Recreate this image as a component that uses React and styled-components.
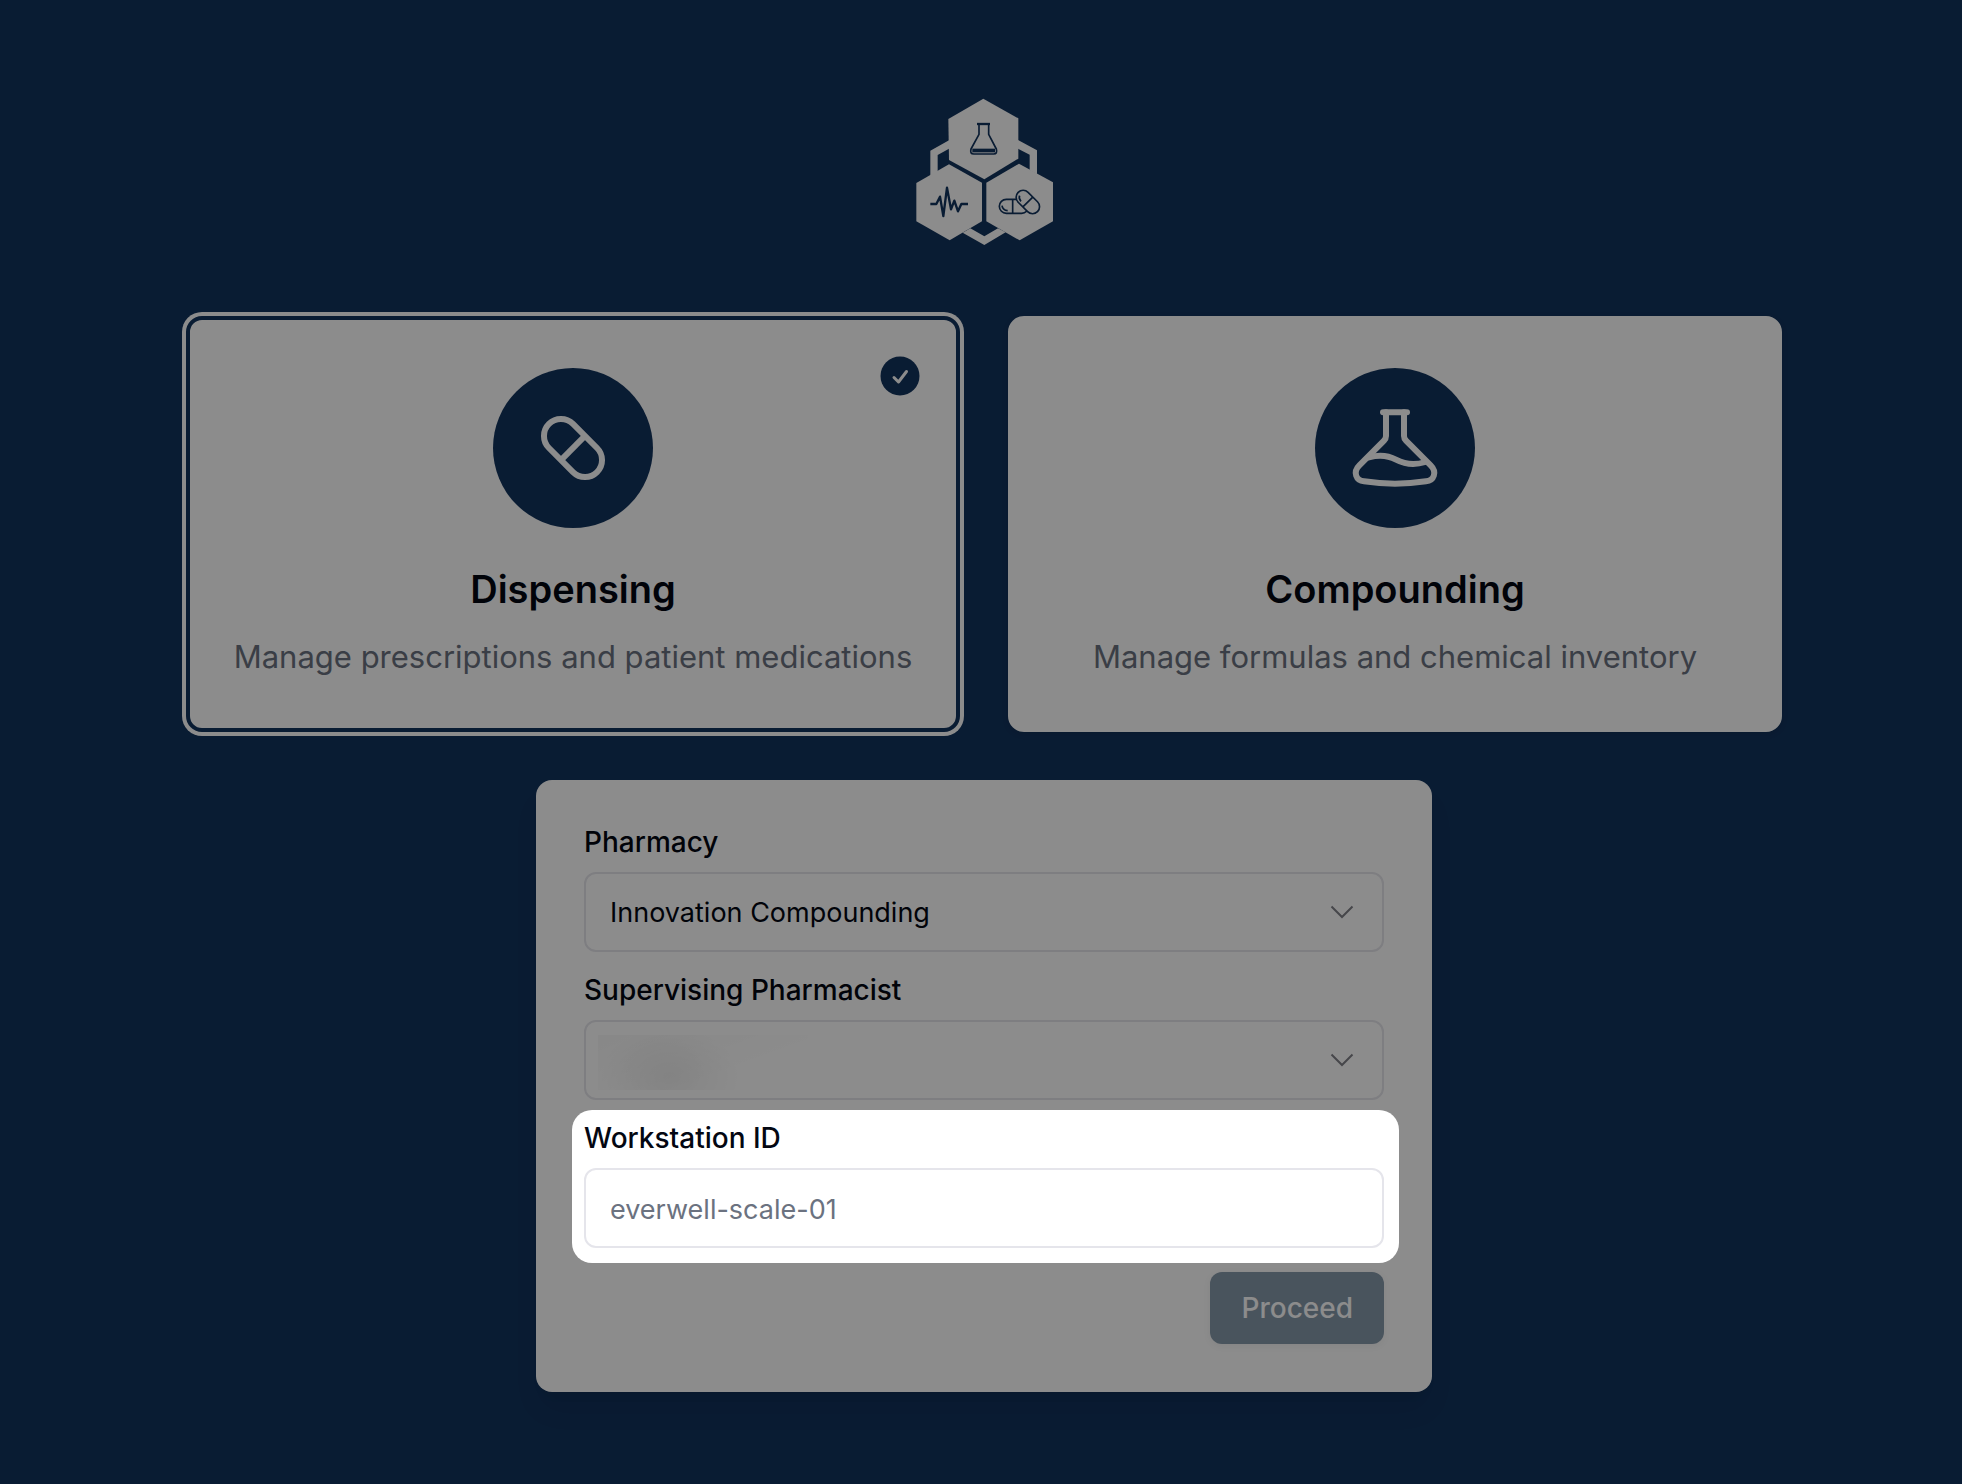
import React, { useState } from 'react'
import styled, { createGlobalStyle, css } from 'styled-components';

const NAVY = '#12335d';

const workspaces = [
    { id: 'dispensing', title: 'Dispensing', text: 'Manage prescriptions and patient medications', Icon: PillIcon },
    { id: 'compounding', title: 'Compounding', text: 'Manage formulas and chemical inventory', Icon: FlaskIcon },
]

function Logo() {
    return (
        <svg width="160" height="160" viewBox="12 21 480 480" role="img" aria-label="Pharmacy logo">
            <g fill="#fff">
                <path d="M250 41 355 100V221L253 283 147 225 145 102Z" />
                <path d="M147 238 246 293V409L149 466 49 409V294Z" />
                <path d="M357 236 459 292V409L359 466 259 409V293Z" />
                <path d="M147 166 91 197V273L113 261V210L147 191Z" />
                <path d="M354 165 411 196V268L389 256V209L354 191Z" />
                <path d="M188 443 253 480 317 442 294 430 253 454 211 430Z" />
            </g>
            <g fill="none" stroke={NAVY} strokeWidth="5" strokeLinejoin="round">
                <path d="M231 117H270" strokeWidth="7" />
                <path d="M237 119V148L213 192Q209 207 221 207H281Q293 207 289 192L266 148V119" />
                <path d="M217 191H285V202H217Z" fill={NAVY} stroke="none" />
                <path d="M91 357H109L120 335 130 393 141 308 153 373 163 347 174 379 184 357H204" strokeWidth="7" />
                <rect x="298" y="343" width="88" height="42" rx="21" />
                <path d="M338 343V385M306 362Q308 376 323 377" />
                <g transform="translate(383.5 351) rotate(45)">
                    <rect x="-41" y="-21" width="82" height="42" rx="21" fill="#fff" />
                    <path d="M0 -21V21M-31 4Q-27 13 -16 13" />
                </g>
            </g>
        </svg>
    )
}

function PillIcon() {
    return (
        <svg width="80" height="80" viewBox="-40 -40 80 80" fill="none" stroke="#fff" strokeWidth="6" aria-hidden="true">
            <g transform="rotate(45)">
                <rect x="-34" y="-17" width="68" height="34" rx="17" />
                <path d="M0 -17V17" />
            </g>
        </svg>
    )
}

function FlaskIcon() {
    return (
        <svg width="96" height="96" viewBox="171 150 288 288" fill="none" stroke="#fff" strokeWidth="18" strokeLinecap="round" aria-hidden="true">
            <path d="M279 187H351" />
            <path d="M288 187V258Q288 266 282 272L208 346C188 366 198 392 222 394Q315 408 408 394C432 392 442 366 422 346L348 272Q342 266 342 258V187" />
            <path d="M237 322C260 316 290 314 318 329C345 343 375 346 406 336" />
        </svg>
    )
}

function Chevron() {
    return (
        <ChevronSvg viewBox="0 0 28 28" aria-hidden="true">
            <path d="M3.5 8.5 14 19 24.5 8.5" fill="none" stroke="currentColor" strokeWidth="2" />
        </ChevronSvg>
    )
}

function App() {
    const [selected, setSelected] = useState('dispensing');

    return (
        <Page>
            <GlobalStyle />
            <Logo />
            <Cards>
                {workspaces.map(({ id, title, text, Icon }) => (
                    <Card
                        key={id}
                        type="button"
                        aria-pressed={selected === id}
                        $active={selected === id}
                        onClick={() => setSelected(id)}
                    >
                        {selected === id && (
                            <Badge viewBox="0 0 40 40" aria-hidden="true">
                                <circle cx="20" cy="20" r="19.5" fill={NAVY} />
                                <path d="M14 21.5 18.5 26 26.5 15.5" />
                            </Badge>
                        )}
                        <IconCircle><Icon /></IconCircle>
                        <CardTitle>{title}</CardTitle>
                        <CardText>{text}</CardText>
                    </Card>
                ))}
            </Cards>
            <Form onSubmit={e => e.preventDefault()}>
                <Field>
                    <Label htmlFor="pharmacy">Pharmacy</Label>
                    <SelectBox>
                        <Select id="pharmacy"><option>Innovation Compounding</option></Select>
                        <Chevron />
                    </SelectBox>
                </Field>
                <Field>
                    <Label htmlFor="pharmacist">Supervising Pharmacist</Label>
                    <SelectBox>
                        <Select id="pharmacist"><option></option></Select>
                        <Smudge />
                        <Chevron />
                    </SelectBox>
                </Field>
                <Field>
                    <Label htmlFor="workstation">Workstation ID</Label>
                    <Input id="workstation" type="text" placeholder="everwell-scale-01" />
                    <Spotlight />
                </Field>
                <Proceed type="submit" disabled>Proceed</Proceed>
            </Form>
        </Page>
    )
}

const GlobalStyle = createGlobalStyle`
    * { box-sizing: border-box; }
    body { margin: 0; background: ${NAVY}; }
    body, button, input, select { font-family: Inter, 'Liberation Sans', sans-serif; }
`
const Page = styled.main`
    min-height: 100vh;
    padding: 92px 180px 92px 186px;
    display: flex;
    flex-direction: column;
    align-items: center;
    overflow: hidden;
    color: #030712;
`
const Cards = styled.div`
    width: 100%;
    margin: 64px 0 48px;
    display: grid;
    grid-template-columns: repeat(2, minmax(0, 1fr));
    gap: 48px;
`
const Card = styled.button`
    position: relative;
    display: flex;
    flex-direction: column;
    align-items: center;
    padding: 48px 32px 46px;
    color: inherit;
    background: #fff;
    border: 4px solid ${p => p.$active ? NAVY : '#fff'};
    border-radius: 16px;
    box-shadow: ${p => p.$active ? '0 0 0 4px #fff' : '0 2px 6px rgba(0, 0, 0, 0.1)'};
    cursor: pointer;
`
const Badge = styled.svg`
    position: absolute;
    top: 36px;
    right: 36px;
    width: 40px;
    height: 40px;

    path{
        fill: none;
        stroke: #fff;
        stroke-width: 3;
        stroke-linecap: round;
        stroke-linejoin: round;
    }
`
const IconCircle = styled.span`
    width: 160px;
    height: 160px;
    margin-bottom: 32px;
    display: grid;
    place-items: center;
    border-radius: 50%;
    background: ${NAVY};
`
const CardTitle = styled.span`
    margin-bottom: 14px;
    font-size: 38px;
    line-height: 58px;
    font-weight: 600;
`
const CardText = styled.span`
    font-size: 31px;
    line-height: 50px;
    color: #6b7280;
`
const Form = styled.form`
    width: 100%;
    max-width: 896px;
    padding: 48px;
    display: flex;
    flex-direction: column;
    gap: 24px;
    background: #fff;
    border-radius: 16px;
    box-shadow: 0 20px 30px -6px rgba(0, 0, 0, 0.08), 0 8px 12px -8px rgba(0, 0, 0, 0.1);
`
const Field = styled.div`
    position: relative;
    display: flex;
    flex-direction: column;
    gap: 16px;
`
const Label = styled.label`
    font-size: 28px;
    line-height: 28px;
    font-weight: 500;
`
const control = css`
    width: 100%;
    height: 80px;
    padding: 0 24px;
    font-size: 27px;
    color: inherit;
    background: #fff;
    border: 2px solid #e5e5eb;
    border-radius: 12px;
`
const SelectBox = styled.div`
    position: relative;
    display: flex;
`
const Select = styled.select`
    ${control}
    appearance: none;
`
const ChevronSvg = styled.svg`
    position: absolute;
    top: 26px;
    right: 28px;
    width: 28px;
    height: 28px;
    color: #808188;
    pointer-events: none;
`
const Smudge = styled.div`
    position: absolute;
    top: 15px;
    left: 14px;
    width: 210px;
    height: 55px;
    background:
        radial-gradient(ellipse 70px 50px at 34% 75%, rgba(0, 0, 0, 0.06), transparent),
        linear-gradient(160deg, rgba(0, 0, 0, 0.03), transparent 65%);
    pointer-events: none;
`
const Input = styled.input`
    ${control}
    padding-top: 2px;

    &::placeholder{
        color: #6b7280;
        opacity: 1;
    }
`
/* dims everything on the page except the field it surrounds */
const Spotlight = styled.div`
    position: absolute;
    inset: -14px -15px -15px -12px;
    border-radius: 20px;
    box-shadow: 0 0 0 9999px rgba(0, 0, 0, 0.45);
    pointer-events: none;
    z-index: 1;
`
const Proceed = styled.button`
    align-self: flex-end;
    height: 72px;
    padding: 0 31px;
    font-size: 28px;
    font-weight: 500;
    color: #fff;
    background: #0e3557;
    border: 0;
    border-radius: 12px;
    box-shadow: 0 2px 6px rgba(0, 0, 0, 0.1);
    opacity: 0.5;
`

export default App
